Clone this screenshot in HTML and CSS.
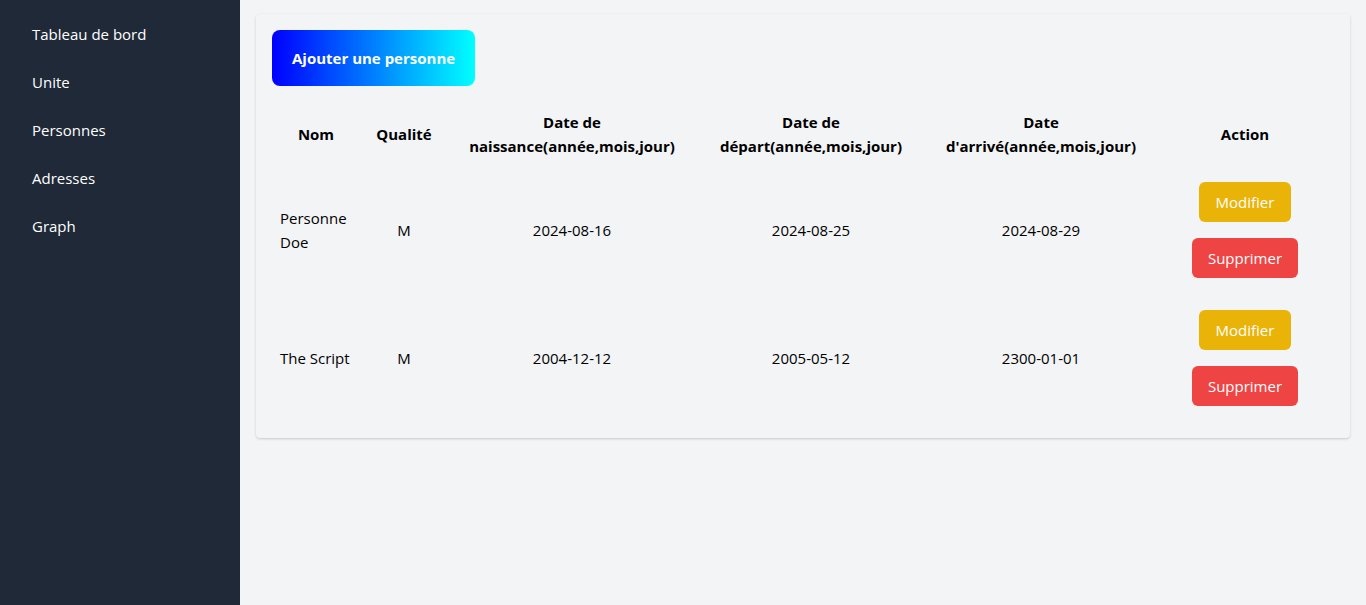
FILE: index.html
```html
<!DOCTYPE html>
<html lang="fr">
<head>
<meta charset="utf-8">
<title>Personnes</title>
<link rel="stylesheet" href="styles.css">
</head>
<body>
<div class="layout">
  <aside class="sidebar">
    <nav class="nav">
      <a class="nav-item" href="#">Tableau de bord</a>
      <a class="nav-item" href="#">Unite</a>
      <a class="nav-item" href="#">Personnes</a>
      <a class="nav-item" href="#">Adresses</a>
      <a class="nav-item" href="#">Graph</a>
    </nav>
  </aside>
  <main class="main">
    <section class="card">
      <button class="add-btn">Ajouter une personne</button>
      <table class="table">
        <colgroup>
          <col class="c-nom">
          <col class="c-qual">
          <col class="c-naiss">
          <col class="c-dep">
          <col class="c-arr">
          <col class="c-act">
        </colgroup>
        <thead>
          <tr>
            <th>Nom</th>
            <th>Qualité</th>
            <th>Date de naissance(année,mois,jour)</th>
            <th>Date de départ(année,mois,jour)</th>
            <th>Date d'arrivé(année,mois,jour)</th>
            <th>Action</th>
          </tr>
        </thead>
        <tbody>
          <tr>
            <td class="name">Personne Doe</td>
            <td>M</td>
            <td>2024-08-16</td>
            <td>2024-08-25</td>
            <td>2024-08-29</td>
            <td>
              <div class="actions">
                <button class="btn btn-edit">Modifier</button>
                <button class="btn btn-del">Supprimer</button>
              </div>
            </td>
          </tr>
          <tr>
            <td class="name">The Script</td>
            <td>M</td>
            <td>2004-12-12</td>
            <td>2005-05-12</td>
            <td>2300-01-01</td>
            <td>
              <div class="actions">
                <button class="btn btn-edit">Modifier</button>
                <button class="btn btn-del">Supprimer</button>
              </div>
            </td>
          </tr>
        </tbody>
      </table>
    </section>
  </main>
</div>
</body>
</html>
```

FILE: styles.css
```css
* { box-sizing: border-box; }
html, body { margin: 0; padding: 0; height: 100%; }
body {
  font-family: "Open Sans", "Noto Sans", sans-serif;
  font-size: 15px;
  line-height: 24px;
  color: #000;
  background: #f3f4f6;
}
.layout {
  display: flex;
  min-height: 605px;
}
.sidebar {
  width: 240px;
  flex: 0 0 240px;
  background: #1f2937;
  padding: 10px 16px;
}
.nav {
  display: flex;
  flex-direction: column;
}
.nav-item {
  display: block;
  padding: 12px 16px;
  color: #fff;
  text-decoration: none;
  font-size: 15px;
  line-height: 24px;
}
.main {
  flex: 1;
  padding: 14px 16px 16px;
}
.card {
  background: #f3f4f6;
  border-radius: 4px;
  box-shadow: 0 1px 3px rgba(0,0,0,0.12), 0 1px 2px rgba(0,0,0,0.06);
  padding: 16px;
}
.add-btn {
  display: block;
  border: 0;
  border-radius: 8px;
  padding: 16px 20px;
  font-family: inherit;
  font-size: 15px;
  font-weight: 700;
  line-height: 24px;
  color: #fff;
  background: linear-gradient(to right, #0000ff, #00ffff);
  margin-bottom: 16px;
  cursor: pointer;
}
.table {
  width: 100%;
  border-collapse: collapse;
  table-layout: fixed;
}
.c-nom { width: 88px; }
.c-qual { width: 88px; }
.c-naiss { width: 248px; }
.c-dep { width: 230px; }
.c-arr { width: 230px; }
.c-act { width: 178px; }
.table th {
  padding: 8px 8px;
  font-weight: 700;
  text-align: center;
  vertical-align: middle;
}
.table td {
  padding: 16px 8px;
  text-align: center;
  vertical-align: middle;
}
.table td.name { text-align: left; }
.actions {
  display: flex;
  flex-direction: column;
  align-items: center;
  gap: 16px;
}
.btn {
  border: 0;
  border-radius: 6px;
  padding: 8px 16px;
  font-family: inherit;
  font-size: 15px;
  line-height: 24px;
  color: #fff;
  cursor: pointer;
}
.btn-edit { background: #eab308; padding-left: 17px; padding-right: 17px; }
.btn-del { background: #ef4444; }
```
